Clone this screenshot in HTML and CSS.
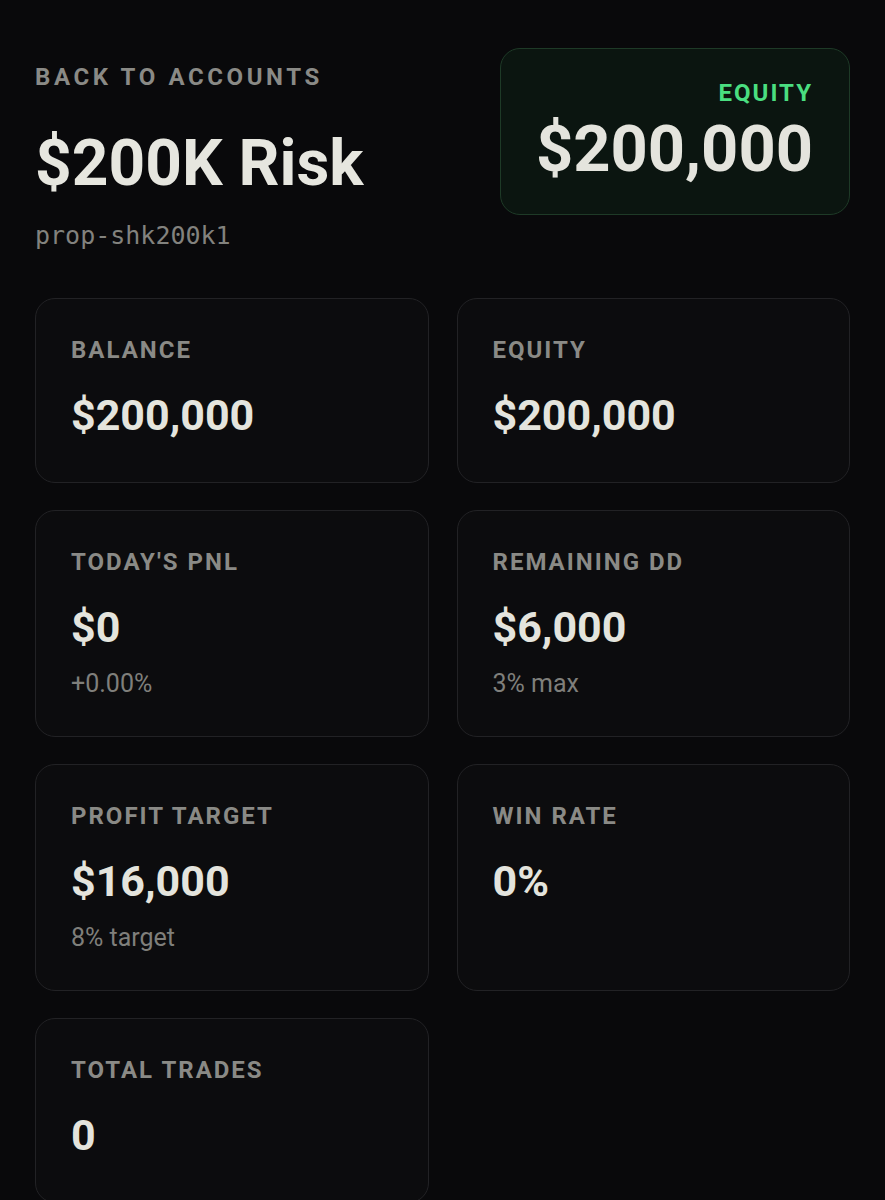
FILE: index.html
```html
<!DOCTYPE html>
<html lang="en">
<head>
    <meta charset="UTF-8">
    <meta name="viewport" content="width=device-width, initial-scale=1.0">
    <title>$200K Risk - Account</title>
    <link rel="stylesheet" href="styles.css">
</head>
<body>
    <div class="page">
        <header class="header">
            <div class="account">
                <a class="back" href="#">Back to accounts</a>
                <h1>$200K Risk</h1>
                <p class="account-id">prop-shk200k1</p>
            </div>
            <div class="equity-box">
                <span class="equity-label">Equity</span>
                <span class="equity-value">$200,000</span>
            </div>
        </header>

        <div class="stats">
            <div class="card">
                <span class="label">Balance</span>
                <span class="value">$200,000</span>
            </div>
            <div class="card">
                <span class="label">Equity</span>
                <span class="value">$200,000</span>
            </div>
            <div class="card">
                <span class="label">Today's PnL</span>
                <span class="value">$0</span>
                <span class="sub">+0.00%</span>
            </div>
            <div class="card">
                <span class="label">Remaining DD</span>
                <span class="value">$6,000</span>
                <span class="sub">3% max</span>
            </div>
            <div class="card">
                <span class="label">Profit Target</span>
                <span class="value">$16,000</span>
                <span class="sub">8% target</span>
            </div>
            <div class="card">
                <span class="label">Win Rate</span>
                <span class="value">0%</span>
            </div>
            <div class="card">
                <span class="label">Total Trades</span>
                <span class="value">0</span>
            </div>
        </div>
    </div>
</body>
</html>
```

FILE: styles.css
```css
body {
    margin: 0;
    background-color: #09090b;
    color: #e4e4dd;
    font-family: Roboto, "Liberation Sans", sans-serif;
}
.page {
    padding: 48px 35px 40px;
}
.header {
    display: flex;
    justify-content: space-between;
    align-items: flex-start;
}
.account {
    padding-top: 15px;
}
.back {
    display: block;
    font-size: 24px;
    line-height: 28px;
    font-weight: 700;
    letter-spacing: 3.6px;
    text-transform: uppercase;
    text-decoration: none;
    color: #8a8a86;
}
h1 {
    margin: 34px 0 0;
    font-size: 64px;
    line-height: 78px;
    font-weight: 700;
    color: #e6e6df;
}
.account-id {
    margin: 18px 0 0;
    font-family: "DejaVu Sans Mono", monospace;
    font-size: 25px;
    line-height: 30px;
    color: #82827e;
}
.equity-box {
    display: flex;
    flex-direction: column;
    align-items: flex-end;
    width: 350px;
    box-sizing: border-box;
    padding: 30px 36px 26px;
    background: #0b1510;
    border: 1px solid #1e3a27;
    border-radius: 20px;
}
.equity-label {
    font-size: 24px;
    line-height: 28px;
    font-weight: 700;
    letter-spacing: 2px;
    text-transform: uppercase;
    color: #4ade80;
}
.equity-value {
    margin-top: 3px;
    font-size: 65px;
    line-height: 78px;
    font-weight: 700;
}
.stats {
    display: grid;
    grid-template-columns: 1fr 1fr;
    gap: 27px 28px;
    margin-top: 47px;
}
.card {
    display: flex;
    flex-direction: column;
    align-items: flex-start;
    padding: 37px 35px 38px;
    background: #0c0c0e;
    border: 1px solid #222225;
    border-radius: 20px;
}
.label {
    font-size: 24px;
    line-height: 28px;
    font-weight: 700;
    letter-spacing: 2px;
    text-transform: uppercase;
    color: #8a8a86;
}
.value {
    margin-top: 23px;
    font-size: 43px;
    line-height: 57px;
    font-weight: 700;
}
.sub {
    margin-top: 14px;
    font-size: 25px;
    line-height: 28px;
    color: #7f7f7b;
}
```
